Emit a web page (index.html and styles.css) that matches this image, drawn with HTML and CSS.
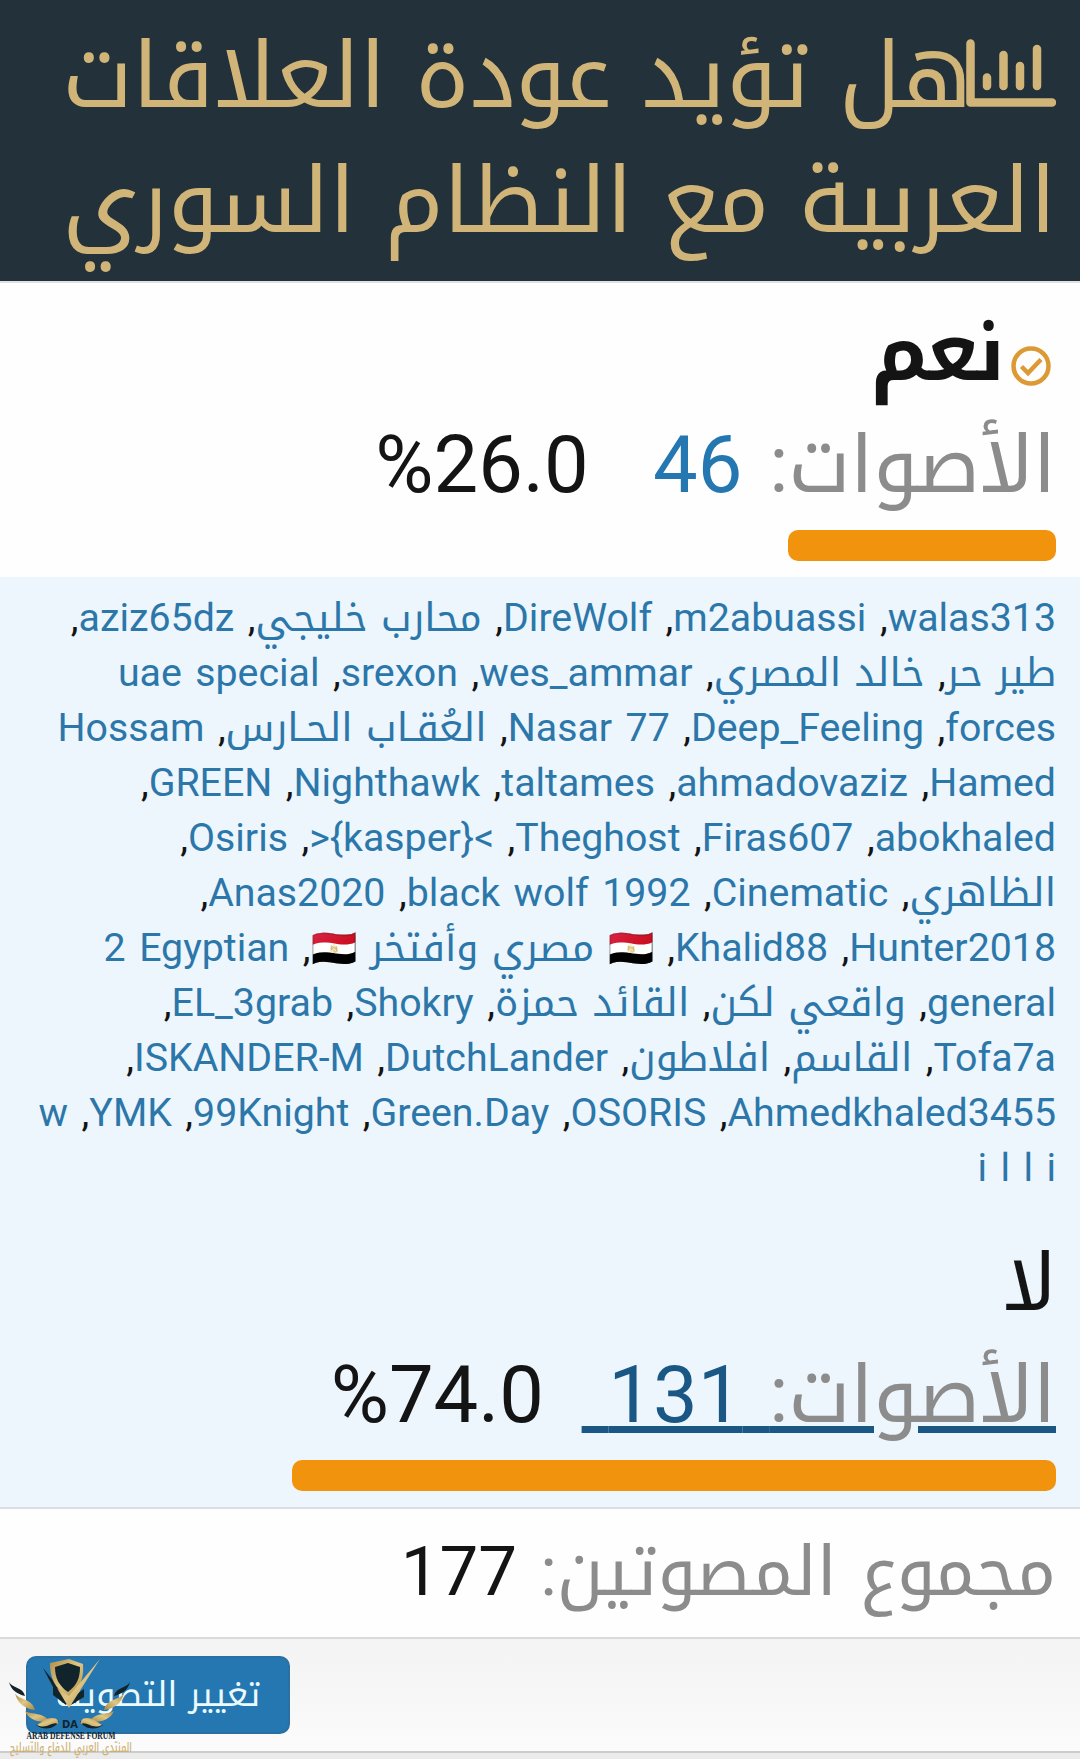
FILE: index.html
```html
<!DOCTYPE html>
<html lang="ar" dir="rtl">
<head>
    <meta charset="UTF-8">
    <meta name="viewport" content="width=device-width, initial-scale=1.0">
    <title>هل تؤيد عودة العلاقات العربية مع النظام السوري</title>
    <link rel="stylesheet" href="styles.css">
</head>
<body>
    <div class="poll">
        <h2 class="poll-header">
            <svg class="poll-icon" viewBox="0 0 90 68">
                <path d="M4.5 4.5V63.5H86" />
                <path d="M21 38.500V47M37.500 16V47M54 27V47M71 10V47" />
            </svg>هل تؤيد عودة العلاقات العربية مع النظام السوري
        </h2>

        <div class="response">
            <h3 class="response-title voted">
                <svg class="check-icon" viewBox="0 0 40 40">
                    <circle cx="20" cy="20" r="17.500" />
                    <path d="M10.500 20.500l6.500 6.500 13-13.500" />
                </svg>نعم
            </h3>
            <div class="response-votes">
                <a href="#" class="votes"><span class="label">الأصوات:</span> 46&nbsp;</a>
                <bdo dir="ltr" class="percent">%26.0</bdo>
            </div>
            <div class="bar"><span style="width: 26%"></span></div>
        </div>

        <div class="response active">
            <ul class="voters">
                <li><a href="#" dir="auto">walas313</a></li>
                <li><a href="#" dir="auto">m2abuassi</a></li>
                <li><a href="#" dir="auto">DireWolf</a></li>
                <li><a href="#" dir="auto">محارب خليجي</a></li>
                <li><a href="#" dir="auto">aziz65dz</a></li>
                <li><a href="#" dir="auto">طير حر</a></li>
                <li><a href="#" dir="auto">خالد المصري</a></li>
                <li><a href="#" dir="auto">wes_ammar</a></li>
                <li><a href="#" dir="auto">srexon</a></li>
                <li><a href="#" dir="auto">uae special forces</a></li>
                <li><a href="#" dir="auto">Deep_Feeling</a></li>
                <li><a href="#" dir="auto">Nasar 77</a></li>
                <li><a href="#" dir="auto">العُقـاب الحـارس</a></li>
                <li><a href="#" dir="auto">Hossam Hamed</a></li>
                <li><a href="#" dir="auto">ahmadovaziz</a></li>
                <li><a href="#" dir="auto">taltames</a></li>
                <li><a href="#" dir="auto">Nighthawk</a></li>
                <li><a href="#" dir="auto">GREEN</a></li>
                <li><a href="#" dir="auto">abokhaled</a></li>
                <li><a href="#" dir="auto">Firas607</a></li>
                <li><a href="#" dir="auto">Theghost</a></li>
                <li><a href="#" dir="auto">&gt;{kasper}&lt;</a></li>
                <li><a href="#" dir="auto">Osiris</a></li>
                <li><a href="#" dir="auto">الظاهري</a></li>
                <li><a href="#" dir="auto">Cinematic</a></li>
                <li><a href="#" dir="auto">black wolf 1992</a></li>
                <li><a href="#" dir="auto">Anas2020</a></li>
                <li><a href="#" dir="auto">Hunter2018</a></li>
                <li><a href="#" dir="auto">Khalid88</a></li>
                <li><a href="#" dir="auto"><span class="flag">🇪🇬</span> مصري وأفتخر <span class="flag">🇪🇬</span></a></li>
                <li><a href="#" dir="auto">2 Egyptian general</a></li>
                <li><a href="#" dir="auto">واقعي لكن</a></li>
                <li><a href="#" dir="auto">القائد حمزة</a></li>
                <li><a href="#" dir="auto">Shokry</a></li>
                <li><a href="#" dir="auto">EL_3grab</a></li>
                <li><a href="#" dir="auto">Tofa7a</a></li>
                <li><a href="#" dir="auto">القاسم</a></li>
                <li><a href="#" dir="auto">افلاطون</a></li>
                <li><a href="#" dir="auto">DutchLander</a></li>
                <li><a href="#" dir="auto">ISKANDER-M</a></li>
                <li><a href="#" dir="auto">Ahmedkhaled3455</a></li>
                <li><a href="#" dir="auto">OSORIS</a></li>
                <li><a href="#" dir="auto">Green.Day</a></li>
                <li><a href="#" dir="auto">99Knight</a></li>
                <li><a href="#" dir="auto">YMK</a></li>
                <li><a href="#" dir="auto">w i&nbsp;l&nbsp;l&nbsp;i</a></li>
            </ul>

            <h3 class="response-title">لا</h3>
            <div class="response-votes">
                <a href="#" class="votes hovered"><span class="label">الأصوات:</span> 131&nbsp;</a>
                <bdo dir="ltr" class="percent">%74.0</bdo>
            </div>
            <div class="bar"><span style="width: 74%"></span></div>
        </div>

        <div class="total"><span class="label">مجموع المصوتين:</span> 177</div>

        <div class="poll-footer">
            <a href="#" class="button">تغيير التصويت</a>
        </div>
    </div>

    <svg class="watermark" viewBox="0 0 140 109">
        <defs>
            <linearGradient id="gold" x1="0" y1="0" x2="1" y2="1">
                <stop offset="0" stop-color="#b08d45" />
                <stop offset=".5" stop-color="#e0c684" />
                <stop offset="1" stop-color="#a88740" />
            </linearGradient>
            <g id="wing">
                <path class="dark" d="M9 32c3 6 14 5 16 14-8-2-14-6-16-14z" />
                <path class="gold" d="M15 43c3 7 17 5 20 17-10-1-18-7-20-17z" />
                <path class="gold" d="M25 61c7 4 18 1 24 10-10 2-20-1-24-10z" />
                <path class="dark" d="M36 75c9-1 12-7 23-4-4 8-15 10-23 4z" />
                <path class="gold" d="M37 75c5-3 8-7 15-7 5 0 7 3 6 6-6-3-11 6-21 1z" />
            </g>
        </defs>
        <use href="#wing" />
        <use href="#wing" transform="matrix(-1 0 0 1 139 0)" />
        <path class="dark" d="M43 18l26 32-3 5-13-10v-8z" />
        <path class="dark" d="M84 39v8l-13 8 3-9z" />
        <path class="gold" d="M50 13l19-4 14 5c1 14-2 24-15 33-14-9-18-20-18-34z" />
        <path class="dark" d="M55 17l13-4 12 4c0 11-3 18-12 25-9-6-13-14-13-25z" />
        <path class="gold" d="M100 9L69 58 57 38l12 8z" />
        <text class="mono" x="70" y="78" textLength="16" lengthAdjust="spacingAndGlyphs">DA</text>
        <text class="latin" x="71" y="89" textLength="89" lengthAdjust="spacingAndGlyphs">ARAB DEFENSE FORUM</text>
        <text class="arabic" x="71" y="102" textLength="122" lengthAdjust="spacingAndGlyphs">المنتدى العربي للدفاع والتسليح</text>
    </svg>
</body>
</html>
```
FILE: styles.css
```css
:root {
    --gold: #d1b578;
    --link: #2577b1;
    --link-hover: #1a5784;
    --text: #141414;
    --muted: #8c8c8c;
    --orange: #f2930d;
}

* {
    box-sizing: border-box;
}

body {
    margin: 0;
    min-height: 1759px;
    background: #ebebeb;
    color: var(--text);
    font-family: Roboto, 'Noto Kufi Arabic', sans-serif;
    position: relative;
    overflow: hidden;
}

a {
    color: var(--link);
    text-decoration: none;
}

.poll {
    background: #fefefe;
    border-bottom: 2px solid #cbcbcb;
}

.poll-header {
    margin: 0;
    height: 283px;
    padding: 14px 24px;
    background: #22313a;
    border-bottom: 2px solid #dfe1e5;
    color: var(--gold);
    font-family: 'Noto Kufi Arabic', sans-serif;
    font-size: 90.200px;
    font-weight: 400;
    line-height: 125px;
    word-spacing: -1px;
}

.poll-icon {
    width: 90px;
    height: 68px;
    margin-left: -6px;
    fill: none;
    stroke: currentColor;
    stroke-width: 8.500;
    stroke-linecap: round;
    stroke-linejoin: round;
}

.response {
    padding: 15px 24px 16px;
}

.active {
    height: 932px;
    background: #edf5fd;
    border-bottom: 2px solid #dadde1;
    padding-top: 14px;
}

.response-title {
    margin: 0;
    font-size: 79px;
    font-weight: 400;
    line-height: 111px;
}

.voted {
    font-weight: 700;
}

.check-icon {
    width: 40px;
    height: 40px;
    margin: 0 5px 0 6px;
    vertical-align: -6px;
    fill: none;
    stroke: #dc9a35;
    stroke-width: 4.500;
}

.response-votes {
    height: 111px;
    font-size: 79.500px;
    line-height: 112px;
    word-spacing: 7px;
    white-space: nowrap;
}

.label {
    color: var(--muted);
}

.percent {
    margin-right: 11px;
}

.hovered {
    color: var(--link-hover);
    text-decoration: underline;
    text-decoration-thickness: 7px;
}

.bar {
    height: 31px;
    margin-top: 10px;
}

.bar span {
    display: block;
    height: 31px;
    border-radius: 10px;
    background: var(--orange);
}

.voters {
    margin: 0 0 32px;
    padding: 0;
    list-style: none;
    font-size: 39.300px;
    line-height: 55px;
    word-spacing: 3.700px;
}

.voters a {
    color: #2c77a9;
}

.voters li {
    display: inline;
}

.voters li::after {
    content: ",";
}

.voters li:last-child::after {
    content: "";
}

.flag {
    font-size: 37px;
}

.total {
    height: 130px;
    padding: 14px 24px;
    border-bottom: 2px solid #dadada;
    font-size: 69px;
    line-height: 98px;
    word-spacing: 6px;
}

.poll-footer {
    display: flex;
    justify-content: flex-end;
    height: 112px;
    padding: 17px 26px;
    background: linear-gradient(#f3f3f3, #fbfbfb);
}

.button {
    height: 78px;
    width: 264px;
    border: 2px solid #2a70a2;
    border-radius: 10px;
    background: var(--link);
    color: #e9fbff;
    font-size: 34px;
    line-height: 73px;
    word-spacing: 3px;
    text-align: center;
}

.watermark {
    position: absolute;
    left: 0;
    top: 1650px;
    width: 140px;
    height: 109px;
    direction: ltr;
}

.watermark .gold {
    fill: url(#gold);
}

.watermark .dark {
    fill: #11232b;
}

.watermark text {
    text-anchor: middle;
    fill: #11232b;
}

.watermark .mono {
    font: 700 10px 'DejaVu Sans', sans-serif;
}

.watermark .latin {
    font: 700 10.500px 'Liberation Serif', serif;
}

.watermark .arabic {
    font: 500 13px 'Noto Kufi Arabic', sans-serif;
    fill: #ccb071;
}
```
